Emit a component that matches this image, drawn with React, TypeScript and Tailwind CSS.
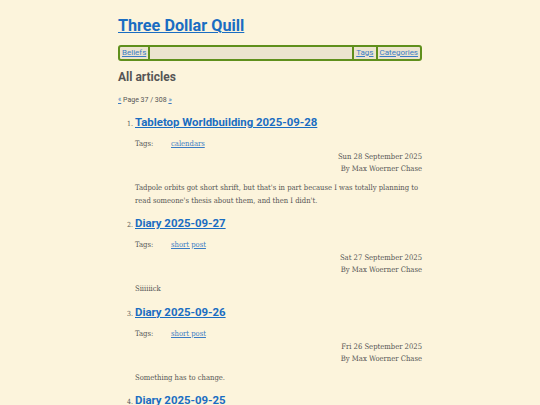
import React from 'react';

interface Article {
  title: string;
  tag: string;
  date: string;
  summary: string;
}

const articles: Article[] = [
  {
    title: 'Tabletop Worldbuilding 2025-09-28',
    tag: 'calendars',
    date: 'Sun 28 September 2025',
    summary:
      "Tadpole orbits got short shrift, but that's in part because I was totally planning to read someone's thesis about them, and then I didn't.",
  },
  { title: 'Diary 2025-09-27', tag: 'short post', date: 'Sat 27 September 2025', summary: 'Siiiiiick' },
  { title: 'Diary 2025-09-26', tag: 'short post', date: 'Fri 26 September 2025', summary: 'Something has to change.' },
  { title: 'Diary 2025-09-25', tag: 'short post', date: 'Thu 25 September 2025', summary: 'Eh.' },
];

const heading = "font-['Roboto','Noto_Sans',sans-serif]";
const body = "font-['DejaVu_Serif_Condensed','Liberation_Serif',serif]";

export default function App() {
  return (
    <div className={`min-h-[405px] bg-[#fcf4dc] text-[#555] ${body}`}>
      <div className="w-[304px] mx-auto pt-[15px]">
        {/* 标题 */}
        <h1 className={`${heading} text-[16.2px] leading-[22px] font-bold`}>
          <a href="#" className="text-[#1a6dc2] underline">Three Dollar Quill</a>
        </h1>

        {/* 导航 */}
        <nav className={`${heading} mt-[8px] flex items-center h-[16px] border-2 border-[#5f8f1c] rounded-[3px] bg-[#ece4cf] text-[8px] leading-[12px]`}>
          <a href="#" className="px-[2px] text-[#3b7cc4] underline border-r-2 border-[#5f8f1c]">Beliefs</a>
          <div className="flex-1" />
          <a href="#" className="px-[2px] text-[#3b7cc4] underline border-l-2 border-r-2 border-[#5f8f1c]">Tags</a>
          <a href="#" className="px-[2px] text-[#3b7cc4] underline">Categories</a>
        </nav>

        <h2 className={`${heading} mt-[8px] text-[12px] leading-[16px] font-bold text-[#555]`}>All articles</h2>

        <p className={`${heading} mt-[10px] text-[7px] leading-[10px]`}>
          <a href="#" className="text-[#3b7cc4] underline">«</a> Page 37 / 308{' '}
          <a href="#" className="text-[#3b7cc4] underline">»</a>
        </p>

        <ol className="mt-[9px] pl-[17px] list-decimal marker:text-[7px]">
          {articles.map((a) => (
            <li key={a.title} className="mb-[8px]">
              <h3 className={`${heading} text-[11.4px] leading-[16px] font-bold`}>
                <a href="#" className="text-[#1a6dc2] underline">{a.title}</a>
              </h3>
              <div className="mt-[8px] flex text-[7.6px] leading-[12px]">
                <span className="w-[36px]">Tags:</span>
                <a href="#" className="text-[#3b7cc4] underline">{a.tag}</a>
              </div>
              <div className="mt-[1px] text-right text-[7.6px] leading-[12px]">
                <div>{a.date}</div>
                <div>By Max Woerner Chase</div>
              </div>
              <p className="mt-[7px] text-[7.6px] leading-[12.5px]">{a.summary}</p>
            </li>
          ))}
        </ol>
      </div>
    </div>
  );
}
